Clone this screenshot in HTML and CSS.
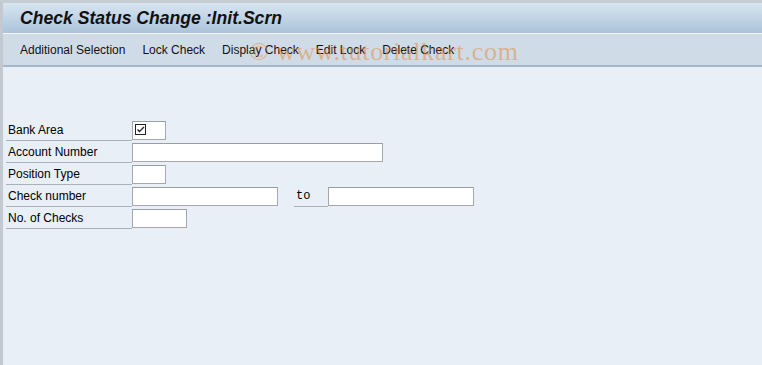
FILE: index.html
```html
<!DOCTYPE html>
<html>
<head>
    <title>Check Status Change :Init.Scrn</title>
    <link rel="stylesheet" href="styles.css">
</head>
<body>
    <div class="screen">
        <div class="title-bar">
            <h1>Check Status Change :Init.Scrn</h1>
        </div>
        <div class="tool-bar">
            <span class="tool-item">Additional Selection</span>
            <span class="tool-item">Lock Check</span>
            <span class="tool-item">Display Check</span>
            <span class="tool-item">Edit Lock</span>
            <span class="tool-item">Delete Check</span>
            <span class="watermark">&copy; www.tutorialkart.com</span>
        </div>
        <div class="form">
            <div class="row">
                <label class="field-label">Bank Area</label>
                <div class="field short check">
                    <svg width="11" height="11" viewBox="0 0 11 11">
                        <rect x="0.5" y="0.5" width="10" height="10" fill="none" stroke="#222" stroke-width="1"/>
                        <path d="M2.5 5.5 L4.5 7.5 L9 3" fill="none" stroke="#222" stroke-width="1.3"/>
                    </svg>
                </div>
            </div>
            <div class="row">
                <label class="field-label">Account Number</label>
                <div class="field long"></div>
            </div>
            <div class="row">
                <label class="field-label">Position Type</label>
                <div class="field short"></div>
            </div>
            <div class="row">
                <label class="field-label">Check number</label>
                <div class="field medium"></div>
                <span class="to-label">to</span>
                <div class="field medium"></div>
            </div>
            <div class="row">
                <label class="field-label">No. of Checks</label>
                <div class="field count"></div>
            </div>
        </div>
    </div>
</body>
</html>
```
FILE: styles.css
```css
html, body {
    margin: 0;
    padding: 0;
    height: 100%;
}
body {
    background: #e8eff7;
    font-family: 'Liberation Sans', Arial, sans-serif;
    color: #000;
}
.screen {
    height: 100%;
    box-sizing: border-box;
    border-left: 3px solid #c3c9d0;
    border-top: 3px solid #c6ccd3;
}

.title-bar {
    height: 30px;
    background: linear-gradient(#d8e5f1, #abc3da);
    border-bottom: 1px solid #f4f8fb;
    display: flex;
    align-items: center;
    padding-left: 17px;
}
.title-bar h1 {
    margin: 0;
    font-size: 17.6px;
    font-weight: bold;
    font-style: italic;
    color: #111;
}

.tool-bar {
    position: relative;
    height: 31px;
    background: #cfdce8;
    border-bottom: 2px solid #a8b8c9;
    display: flex;
    align-items: center;
    padding-left: 17px;
    gap: 17px;
    font-size: 12px;
}
.tool-item {
    color: #111;
}
.watermark {
    position: absolute;
    left: 246px;
    top: 3px;
    font-family: 'Liberation Serif', 'Times New Roman', serif;
    font-size: 26px;
    color: rgba(230, 140, 60, 0.55);
    letter-spacing: 0.7px;
    pointer-events: none;
}

.form {
    padding: 54px 0 0 3px;
}
.row {
    display: flex;
    align-items: flex-start;
    height: 22px;
}
.field-label {
    width: 126px;
    height: 20px;
    line-height: 19px;
    padding-left: 2px;
    box-sizing: border-box;
    border-bottom: 1px solid #a9b1b9;
    font-size: 12px;
}
.field {
    height: 19px;
    box-sizing: border-box;
    background: #fff;
    border: 1px solid #a5a9ad;
    border-top-color: #9a9ea2;
}
.short { width: 34px; }
.long { width: 251px; }
.medium { width: 146px; }
.count { width: 55px; }
.check {
    padding: 2px 0 0 2px;
}
.check svg {
    display: block;
}
.to-label {
    width: 34px;
    margin-left: 16px;
    height: 20px;
    box-sizing: border-box;
    border-bottom: 1px solid #a9b1b9;
    font-family: 'Liberation Mono', 'Courier New', monospace;
    font-size: 12px;
    line-height: 19px;
    padding-left: 2px;
}
```
